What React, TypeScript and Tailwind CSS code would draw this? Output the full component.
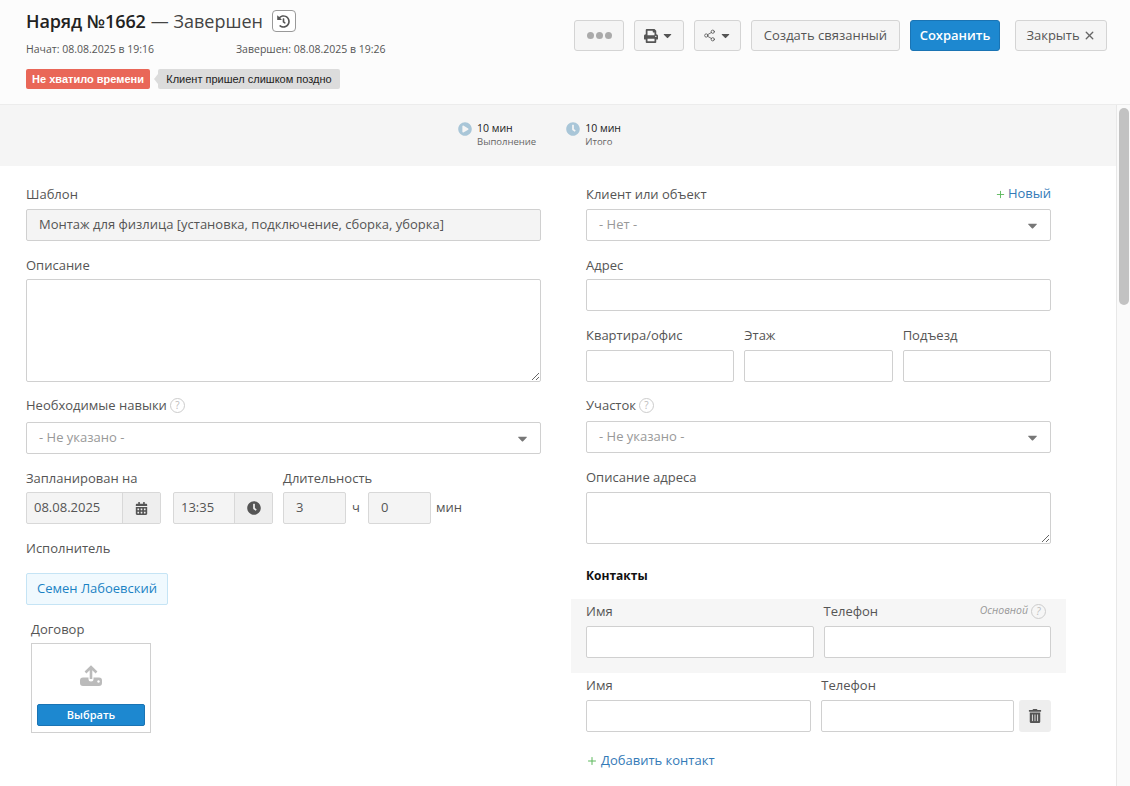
import { FaCalendarAlt, FaCaretDown, FaClock, FaHistory, FaPlayCircle, FaPrint, FaTrashAlt } from "react-icons/fa";
import { Share2, X, Plus } from "lucide-react";

const inputBase = "block h-8 rounded-[2px] border border-[#d0d0d0] bg-white px-3 text-[13px] text-[#555] outline-none";

function Label({ children, className = "" }: { children: React.ReactNode; className?: string }) {
  return <div className={"h-5 text-[13px] leading-5 text-[#555] " + className}>{children}</div>;
}

function Help() {
  return (
    <span className="ml-[3px] inline-flex h-[15px] w-[15px] items-center justify-center rounded-full border border-[#ccc] text-[10px] leading-none text-[#bbb]">?</span>
  );
}

function Select({ text }: { text: string }) {
  return (
    <div className="flex h-8 items-center justify-between rounded-[2px] border border-[#d0d0d0] bg-white pl-3 pr-[10px] text-[13px] text-[#999]">
      <span>{text}</span>
      <FaCaretDown className="text-[15px] text-[#777]" />
    </div>
  );
}

function Input({ className = "", value = "" }: { className?: string; value?: string }) {
  return <input readOnly value={value} className={inputBase + " " + className} />;
}

function HeaderButton({ children, className = "" }: { children: React.ReactNode; className?: string }) {
  return (
    <button className={"flex h-[31px] items-center justify-center rounded-[3px] border border-[#d4d4d4] bg-[#f5f5f5] text-[13px] text-[#555] " + className}>
      {children}
    </button>
  );
}

function Addon({ children, className = "" }: { children: React.ReactNode; className?: string }) {
  return (
    <div className={"flex h-8 items-center rounded-[2px] border border-[#d8d8d8] bg-[#f4f4f4] text-[13px] text-[#555] " + className}>
      {children}
    </div>
  );
}

export default function App() {
  return (
    <div className="flex h-[786px] w-[1130px] flex-col overflow-hidden bg-white font-['Open_Sans',sans-serif]">
      <header className="flex h-[105px] shrink-0 justify-between border-b border-[#ececec] bg-[#fcfcfc] pl-[26px] pr-[23px]">
        <div>
          <div className="mt-[8px] flex h-[26px] items-center text-[18px] text-[#333]">
            <span className="font-semibold tracking-[-0.1px] text-[#222]">Наряд №1662</span>
            <span className="ml-[5px] text-[#444]">— Завершен</span>
            <span className="ml-[9px] flex h-[22px] w-[24px] items-center justify-center rounded-[4px] border border-[#999] bg-white">
              <FaHistory className="text-[13px] text-[#555]" />
            </span>
          </div>
          <div className="mt-[6px] flex h-5 items-center text-[10.5px] text-[#555]">
            <span className="w-[210px]">Начат: 08.08.2025 в 19:16</span>
            <span>Завершен: 08.08.2025 в 19:26</span>
          </div>
          <div className="mt-[9px] flex h-5 items-center font-['Liberation_Sans',sans-serif] text-[11px]">
            <span className="flex h-5 w-[124px] items-center justify-center rounded-[2px] bg-[#e96758] font-bold text-white">Не хватило времени</span>
            <span className="ml-1 h-0 w-0 border-y-[5px] border-r-[4px] border-y-transparent border-r-[#dcdcdc]" />
            <span className="flex h-5 w-[182px] items-center justify-center rounded-[2px] bg-[#dcdcdc] text-[#222]">Клиент пришел слишком поздно</span>
          </div>
        </div>
        <div className="mt-[20px] flex gap-[10px]">
          <HeaderButton className="w-[50px] gap-[2px]">
            <span className="h-[7px] w-[7px] rounded-full bg-[#aaa]" />
            <span className="h-[7px] w-[7px] rounded-full bg-[#aaa]" />
            <span className="h-[7px] w-[7px] rounded-full bg-[#aaa]" />
          </HeaderButton>
          <HeaderButton className="w-[50px] gap-[3px]">
            <FaPrint className="text-[14px] text-[#555]" />
            <FaCaretDown className="text-[13px] text-[#555]" />
          </HeaderButton>
          <HeaderButton className="w-[47px] gap-[3px]">
            <Share2 size={13} strokeWidth={1.5} className="text-[#555]" />
            <FaCaretDown className="text-[13px] text-[#555]" />
          </HeaderButton>
          <HeaderButton className="w-[149px]">Создать связанный</HeaderButton>
          <button className="flex h-[31px] w-[90px] items-center justify-center rounded-[3px] border border-[#1a74b4] bg-[#1d88d0] text-[13px] font-semibold text-white">
            Сохранить
          </button>
          <HeaderButton className="ml-[5px] w-[92px] gap-[3px]">
            Закрыть <X size={13} strokeWidth={2.5} className="text-[#666]" />
          </HeaderButton>
        </div>
      </header>

      <div className="flex min-h-0 flex-1">
        <main className="min-w-0 flex-1">
          <div className="flex h-[61px] gap-[30px] bg-[#f5f5f5] pl-[458px] pt-[16px]">
            <div className="flex gap-[5px]">
              <FaPlayCircle className="mt-px text-[14px] text-[#a9c6d8]" />
              <div>
                <div className="h-[14px] text-[10.5px] leading-[14px] text-[#222]">10 мин</div>
                <div className="h-[14px] text-[9.5px] leading-[14px] text-[#666]">Выполнение</div>
              </div>
            </div>
            <div className="flex gap-[5px]">
              <FaClock className="mt-px text-[14px] text-[#a9c6d8]" />
              <div>
                <div className="h-[14px] text-[10.5px] leading-[14px] text-[#222]">10 мин</div>
                <div className="h-[14px] text-[9.5px] leading-[14px] text-[#666]">Итого</div>
              </div>
            </div>
          </div>

          <div className="flex gap-[45px] pl-[26px] pt-[18px]">
            <section className="w-[515px]">
              <Label>Шаблон</Label>
              <div className="mt-[5px] flex h-8 items-center rounded-[2px] border border-[#d0d0d0] bg-[#f4f4f4] px-3 text-[13px] text-[#555]">
                Монтаж для физлица [установка, подключение, сборка, уборка]
              </div>
              <Label className="mt-[14px]">Описание</Label>
              <textarea readOnly className="mt-1 block h-[103px] w-full rounded-[2px] border border-[#d0d0d0] bg-white outline-none" />
              <Label className="mt-[13px] flex items-center">Необходимые навыки<Help /></Label>
              <div className="mt-[7px]"><Select text="- Не указано -" /></div>
              <div className="mt-[14px] flex">
                <div className="w-[147px]"><Label>Запланирован на</Label></div>
                <div className="ml-[110px]"><Label>Длительность</Label></div>
              </div>
              <div className="mt-[4px] flex items-center">
                <Addon className="w-[135px] overflow-hidden">
                  <span className="flex-1 pl-[7px]">08.08.2025</span>
                  <span className="flex h-full w-[38px] items-center justify-center border-l border-[#d8d8d8] bg-[#eeeeee]">
                    <FaCalendarAlt className="text-[13px] text-[#555]" />
                  </span>
                </Addon>
                <Addon className="ml-3 w-[100px] overflow-hidden">
                  <span className="flex-1 pl-[7px]">13:35</span>
                  <span className="flex h-full w-[38px] items-center justify-center border-l border-[#d8d8d8] bg-[#eeeeee]">
                    <FaClock className="text-[14px] text-[#555]" />
                  </span>
                </Addon>
                <Addon className="ml-[10px] w-[63px] pl-3">3</Addon>
                <span className="ml-[6px] w-4 text-[13px] text-[#555]">ч</span>
                <Addon className="w-[63px] pl-3">0</Addon>
                <span className="ml-[5px] text-[13px] text-[#555]">мин</span>
              </div>
              <Label className="mt-[14px]">Исполнитель</Label>
              <div className="mt-[15px] flex h-8 w-[142px] items-center justify-center rounded-[2px] border border-[#c5e4f5] bg-[#f0f9fe] text-[13px] text-[#1a82c4]">
                Семен Лабоевский
              </div>
              <Label className="ml-[5px] mt-[14px]">Договор</Label>
              <div className="ml-[5px] mt-[4px] flex h-[90px] w-[120px] flex-col items-center border border-[#d0d0d0] bg-white px-[5px] pt-[18px]">
                <svg width="26" height="26" viewBox="0 0 26 26" className="shrink-0">
                  <path d="M2 18.5a3 3 0 0 1 3-3h5.5v1.5a2.5 2.5 0 0 0 5 0v-1.5H21a3 3 0 0 1 3 3V21a3 3 0 0 1-3 3H5a3 3 0 0 1-3-3z" fill="#bbb" />
                  <path d="M13 17V5M7.5 10.5 13 5l5.5 5.5" fill="none" stroke="#bbb" strokeWidth="2.6" />
                  <circle cx="20.5" cy="19.5" r="1.2" fill="#fff" />
                </svg>
                <button className="mt-[16px] flex h-[22px] w-full shrink-0 items-center justify-center rounded-[2px] border border-[#1a74b4] bg-[#1d88d0] text-[11px] font-semibold text-white">
                  Выбрать
                </button>
              </div>
            </section>

            <section className="w-[465px]">
              <div className="flex items-center justify-between">
                <Label>Клиент или объект</Label>
                <div className="flex h-5 items-center text-[13px] text-[#337ab7]">
                  <Plus size={11} strokeWidth={2} className="mr-[2px] text-[#5cb85c]" />Новый
                </div>
              </div>
              <div className="mt-[5px]"><Select text="- Нет -" /></div>
              <Label className="mt-[14px]">Адрес</Label>
              <Input className="mt-1 w-full" />
              <div className="mt-[14px] grid grid-cols-3 gap-x-[10px]">
                <Label>Квартира/офис</Label>
                <Label>Этаж</Label>
                <Label>Подъезд</Label>
                <Input className="mt-[5px] w-full" />
                <Input className="mt-[5px] w-full" />
                <Input className="mt-[5px] w-full" />
              </div>
              <Label className="mt-[13px] flex items-center">Участок<Help /></Label>
              <div className="mt-[6px]"><Select text="- Не указано -" /></div>
              <Label className="mt-[14px]">Описание адреса</Label>
              <textarea readOnly className="mt-[5px] block h-[52px] w-full rounded-[2px] border border-[#d0d0d0] bg-white outline-none" />
              <div className="mt-[22px] h-5 text-[12px] font-bold leading-5 text-[#111]">Контакты</div>
              <div className="-mx-[15px] mt-[13px] h-[74px] bg-[#f6f6f6] px-[15px] pt-[2px]">
                <div className="grid grid-cols-2 gap-x-[10px]">
                  <Label>Имя</Label>
                  <div className="flex items-center justify-between">
                    <Label>Телефон</Label>
                    <span className="mr-[5px] flex items-center text-[10.5px] italic text-[#999]">Основной<Help /></span>
                  </div>
                  <Input className="mt-[5px] w-full" />
                  <Input className="mt-[5px] w-full" />
                </div>
              </div>
              <div className="mt-[2px] flex gap-x-[10px]">
                <div className="w-[228px]">
                  <Label>Имя</Label>
                  <Input className="mt-[5px] w-full" />
                </div>
                <div className="w-[195px]">
                  <Label>Телефон</Label>
                  <Input className="mt-[5px] w-full" />
                </div>
                <button className="-ml-[5px] mt-[25px] flex h-8 w-8 shrink-0 items-center justify-center rounded-[3px] bg-[#eeeeee]">
                  <FaTrashAlt className="text-[14px] text-[#555]" />
                </button>
              </div>
              <div className="mt-[19px] flex h-5 items-center text-[13px] text-[#337ab7]">
                <Plus size={12} strokeWidth={2} className="mr-[3px] text-[#5cb85c]" />Добавить контакт
              </div>
            </section>
          </div>
        </main>
        <aside className="w-[14px] shrink-0 border-l border-[#e8e8e8] bg-[#fafafa] pl-[2px] pr-px pt-[3px]">
          <div className="h-[197px] rounded-full bg-[#c2c2c2]" />
        </aside>
      </div>
    </div>
  );
}
